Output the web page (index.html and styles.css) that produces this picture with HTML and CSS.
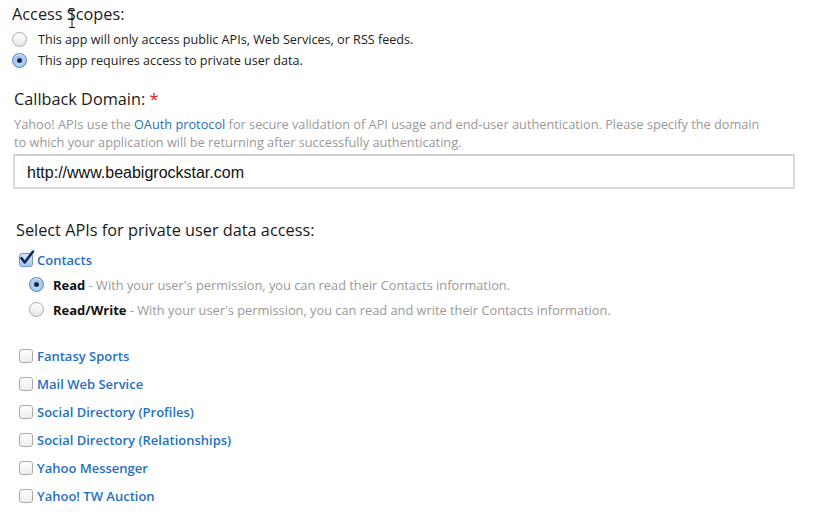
FILE: index.html
```html
<!DOCTYPE html>
<html>
<head>
<meta charset="utf-8">
<link rel="stylesheet" href="styles.css">
</head>
<body>
<div class="page">
  <section class="scopes">
    <h2 class="heading h-scopes">Access Scopes:</h2>
    <div class="radios">
      <div class="radio-row"><span class="radio"></span><span class="opt">This app will only access public APIs, Web Services, or RSS feeds.</span></div>
      <div class="radio-row"><span class="radio on"></span><span class="opt">This app requires access to private user data.</span></div>
    </div>
    <svg class="ibeam" width="8" height="20" viewBox="0 0 8 20"><path d="M1 1.5h6M4 1.5v17M1 18.5h6M2 10h4" stroke="#111" stroke-width="1" fill="none"/></svg>
  </section>

  <section class="callback">
    <h2 class="heading h-callback">Callback Domain: <span class="req">*</span></h2>
    <p class="help">Yahoo! APIs use the <a class="link" href="#">OAuth protocol</a> for secure validation of API usage and end-user authentication. Please specify the domain<br>to which your application will be returning after successfully authenticating.</p>
    <div class="input">http://www.beabigrockstar.com</div>
  </section>

  <section class="apis">
    <h2 class="heading h-apis">Select APIs for private user data access:</h2>
    <div class="check-row first"><span class="check on"><svg width="16" height="16" viewBox="0 0 16 16"><path d="M2.5 8.2l3.2 4.3L14 1.5" stroke="#0f2a5c" stroke-width="2.6" fill="none" stroke-linecap="round" stroke-linejoin="round"/></svg></span><a class="api" href="#">Contacts</a></div>
    <div class="sub">
      <div class="sub-row"><span class="radio on"></span><b class="perm">Read</b><span class="desc"> - With your user's permission, you can read their Contacts information.</span></div>
      <div class="sub-row"><span class="radio"></span><b class="perm">Read/Write</b><span class="desc"> - With your user's permission, you can read and write their Contacts information.</span></div>
    </div>
    <div class="list">
      <div class="check-row"><span class="check"></span><a class="api" href="#">Fantasy Sports</a></div>
      <div class="check-row"><span class="check"></span><a class="api" href="#">Mail Web Service</a></div>
      <div class="check-row"><span class="check"></span><a class="api" href="#">Social Directory (Profiles)</a></div>
      <div class="check-row"><span class="check"></span><a class="api" href="#">Social Directory (Relationships)</a></div>
      <div class="check-row"><span class="check"></span><a class="api" href="#">Yahoo Messenger</a></div>
      <div class="check-row"><span class="check"></span><a class="api" href="#">Yahoo! TW Auction</a></div>
    </div>
  </section>
</div>
</body>
</html>
```

FILE: styles.css
```css
* { box-sizing: border-box; }
html, body { margin: 0; padding: 0; background: #fff; }
body { font-family: "Open Sans", "DejaVu Sans", sans-serif; color: #222; }
.page { width: 816px; height: 514px; overflow: hidden; padding: 0 0 0 12px; }

.heading { margin: 0; font-weight: 400; font-size: 16.3px; line-height: 24px; color: #1a1a1a; }

.scopes { position: relative; padding-top: 2px; }
.ibeam { position: absolute; left: 56px; top: 9px; }
.radios { padding-top: 3px; }
.radio-row { display: flex; align-items: center; height: 21px; gap: 11px; }
.opt { font-size: 12.6px; color: #222; }

.radio { width: 15px; height: 15px; border-radius: 50%; flex: none;
  border: 1px solid #a8a8a8;
  background: linear-gradient(#ffffff, #e6e6e6);
  box-shadow: inset 0 1px 1px rgba(255,255,255,.9);
  display: flex; align-items: center; justify-content: center; }
.radio.on { border-color: #4f7fbf;
  background: radial-gradient(circle at 50% 60%, #d3e6fa 0, #8fbbea 70%, #6d9fdb 100%); }
.radio.on::after { content: ""; width: 5px; height: 5px; border-radius: 50%; background: #142a48; }

.callback { padding-top: 16px; padding-left: 2px; }
.req { color: #e0191c; }
.help { margin: 4px 0 0; font-size: 12.75px; line-height: 18px; color: #999; }
.link { color: #1f6fc5; text-decoration: none; }
.input { margin: 3px 0 0 -1px; width: 782px; height: 35px; border: 2px solid #dcdcdc; border-top-color: #d0d0d0;
  font-family: "Liberation Sans", Arial, sans-serif; font-size: 16px; color: #111;
  padding: 8px 0 0 12px; }

.apis { padding-top: 29px; padding-left: 4px; }
.check-row { display: flex; align-items: center; gap: 4px; height: 28px; padding-left: 3px; }
.check-row.first { margin-top: 7px; height: 22px; }
.check { width: 14px; height: 14px; border-radius: 3px; flex: none; position: relative;
  border: 1px solid #ababab;
  background: linear-gradient(#ffffff, #ececec); }
.check.on { border-color: #6f96c8; background: linear-gradient(#d7e7f9, #a9c9ee); }
.check svg { position: absolute; left: -1px; top: -4px; }
.api { font-size: 13px; font-weight: 600; color: #1f6fc5; text-decoration: none; }

.sub { padding-left: 13px; padding-top: 1px; }
.sub-row { display: flex; align-items: center; height: 25px; }
.sub-row .radio { margin-right: 9px; }
.perm { font-size: 13px; font-weight: 700; color: #111; }
.desc { font-size: 12.8px; color: #999; white-space: pre; }

.list { padding-top: 20px; }
```
